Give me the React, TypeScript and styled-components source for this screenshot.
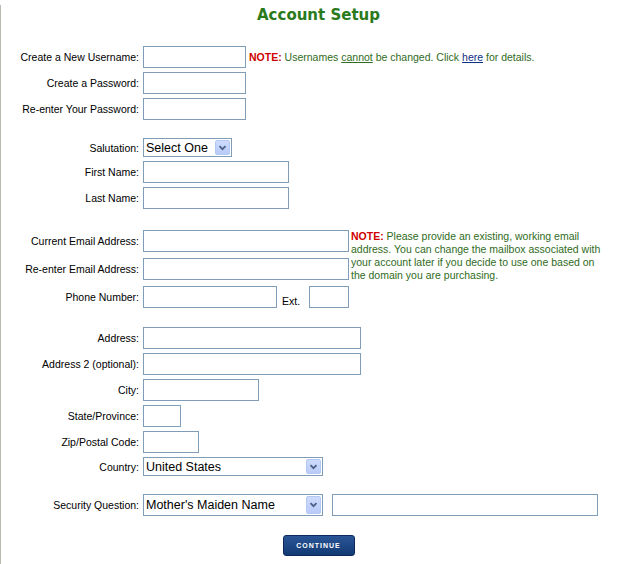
import React from 'react';
import styled, { createGlobalStyle } from 'styled-components';

const GlobalStyle = createGlobalStyle`
  body {
    margin: 0;
    background: #fff;
    font-family: "Liberation Sans", Arial, sans-serif;
    font-size: 10.5px;
    color: #000;
  }
`;

const Page = styled.div`
  min-height: 564px;
  box-sizing: border-box;
  border-left: 1px solid #b9b9b1;
  background: #fff;
`;

const Title = styled.h1`
  margin: 5px 0 0;
  font-family: "DejaVu Sans", Verdana, sans-serif;
  font-size: 15px;
  line-height: 20px;
  font-weight: bold;
  color: #2a7a1c;
  text-align: center;
`;

const Form = styled.form`
  display: flex;
  flex-direction: column;
`;

const Group = styled.div<{ $top: number; $gap: number }>`
  display: flex;
  flex-direction: column;
  gap: ${(p) => p.$gap}px;
  margin-top: ${(p) => p.$top}px;
`;

const Row = styled.div`
  display: flex;
  align-items: center;
`;

const Label = styled.label`
  flex: none;
  width: 139px;
  padding-right: 1px;
  margin-right: 3px;
  box-sizing: border-box;
  text-align: right;
  white-space: nowrap;
`;

const TextInput = styled.input<{ $w: number; $ml?: number }>`
  flex: none;
  width: ${(p) => p.$w}px;
  height: 22px;
  margin: 0 0 0 ${(p) => p.$ml ?? 0}px;
  padding: 1px 3px;
  box-sizing: border-box;
  border: 1px solid #7f9db9;
  background: #fff;
  font: 12px "Liberation Sans", Arial, sans-serif;
  outline: none;
`;

const SelectBox = styled.div<{ $w: number; $h: number }>`
  flex: none;
  display: flex;
  width: ${(p) => p.$w}px;
  height: ${(p) => p.$h}px;
  box-sizing: border-box;
  border: 1px solid #7f9db9;
  background: #fff;
`;

const SelectField = styled.select`
  flex: 1;
  min-width: 0;
  margin: 0;
  padding: 0 0 0 2px;
  border: none;
  appearance: none;
  -webkit-appearance: none;
  background: transparent;
  font: 12.5px "Liberation Sans", Arial, sans-serif;
  color: #000;
  outline: none;
`;

const ArrowButton = styled.span`
  flex: none;
  display: flex;
  align-items: center;
  justify-content: center;
  width: 15px;
  margin: 1px;
  box-sizing: border-box;
  border: 1px solid #b5c7f3;
  border-radius: 2px;
  background: linear-gradient(#cddbfd, #b8cbf8);
`;

const Note = styled.span`
  margin-left: 3px;
  color: #2f6b22;
  white-space: nowrap;
`;

const NoteTag = styled.b`
  color: #d00000;
`;

const Under = styled.span`
  text-decoration: underline;
`;

const Link = styled.a`
  color: #0b2f86;
  text-decoration: underline;
`;

const EmailBlock = styled.div`
  display: flex;
  align-items: flex-start;
  height: 50px;
`;

const EmailRows = styled.div`
  display: flex;
  flex-direction: column;
  gap: 6px;
`;

const EmailNote = styled.div`
  margin: 0 0 0 2px;
  line-height: 13px;
  color: #2f6b22;
  white-space: nowrap;
`;

const Ext = styled.span`
  align-self: flex-end;
  margin: 0 9px 1px 5px;
`;

const ButtonRow = styled.div`
  display: flex;
  justify-content: center;
  margin-top: 19px;
`;

const ContinueButton = styled.button`
  width: 72px;
  height: 21px;
  padding: 0;
  box-sizing: border-box;
  border: 1px solid #0c2b5c;
  border-radius: 3px;
  background: linear-gradient(#2a5596, #123a74);
  color: #fff;
  font: bold 7px "Liberation Sans", Arial, sans-serif;
  letter-spacing: 1px;
  cursor: pointer;
`;

const Chevron = () => (
  <svg width="9" height="6" viewBox="0 0 9 6">
    <path d="M1.5 1.2 L4.5 4.2 L7.5 1.2" fill="none" stroke="#4d6185" strokeWidth="1.8" />
  </svg>
);

const Select = ({ w, h, value }: { w: number; h: number; value: string }) => (
  <SelectBox $w={w} $h={h}>
    <SelectField defaultValue={value}>
      <option>{value}</option>
    </SelectField>
    <ArrowButton>
      <Chevron />
    </ArrowButton>
  </SelectBox>
);

const App: React.FC = () => {
  return (
    <Page>
      <GlobalStyle />
      <Title>Account Setup</Title>
      <Form onSubmit={(e) => e.preventDefault()}>
        <Group $top={21} $gap={4}>
          <Row>
            <Label>Create a New Username:</Label>
            <TextInput $w={103} />
            <Note>
              <NoteTag>NOTE:</NoteTag> Usernames <Under>cannot</Under> be changed. Click{' '}
              <Link href="#">here</Link> for details.
            </Note>
          </Row>
          <Row>
            <Label>Create a Password:</Label>
            <TextInput $w={103} type="password" />
          </Row>
          <Row>
            <Label>Re-enter Your Password:</Label>
            <TextInput $w={103} type="password" />
          </Row>
        </Group>

        <Group $top={18} $gap={4}>
          <Row>
            <Label>Salutation:</Label>
            <Select w={89} h={19} value="Select One" />
          </Row>
          <Row>
            <Label>First Name:</Label>
            <TextInput $w={146} />
          </Row>
          <Row>
            <Label>Last Name:</Label>
            <TextInput $w={146} />
          </Row>
        </Group>

        <Group $top={21} $gap={6}>
          <EmailBlock>
            <EmailRows>
              <Row>
                <Label>Current Email Address:</Label>
                <TextInput $w={206} />
              </Row>
              <Row>
                <Label>Re-enter Email Address:</Label>
                <TextInput $w={206} />
              </Row>
            </EmailRows>
            <EmailNote>
              <NoteTag>NOTE:</NoteTag> Please provide an existing, working email
              <br />
              address. You can change the mailbox associated with
              <br />
              your account later if you decide to use one based on
              <br />
              the domain you are purchasing.
            </EmailNote>
          </EmailBlock>
          <Row>
            <Label>Phone Number:</Label>
            <TextInput $w={134} />
            <Ext>Ext.</Ext>
            <TextInput $w={40} />
          </Row>
        </Group>

        <Group $top={19} $gap={4}>
          <Row>
            <Label>Address:</Label>
            <TextInput $w={218} />
          </Row>
          <Row>
            <Label>Address 2 (optional):</Label>
            <TextInput $w={218} />
          </Row>
          <Row>
            <Label>City:</Label>
            <TextInput $w={116} />
          </Row>
          <Row>
            <Label>State/Province:</Label>
            <TextInput $w={38} />
          </Row>
          <Row>
            <Label>Zip/Postal Code:</Label>
            <TextInput $w={56} />
          </Row>
          <Row>
            <Label>Country:</Label>
            <Select w={180} h={19} value="United States" />
          </Row>
        </Group>

        <Group $top={18} $gap={0}>
          <Row>
            <Label>Security Question:</Label>
            <Select w={180} h={22} value="Mother's Maiden Name" />
            <TextInput $w={266} $ml={9} />
          </Row>
        </Group>

        <ButtonRow>
          <ContinueButton type="submit">CONTINUE</ContinueButton>
        </ButtonRow>
      </Form>
    </Page>
  );
};

export default App;
